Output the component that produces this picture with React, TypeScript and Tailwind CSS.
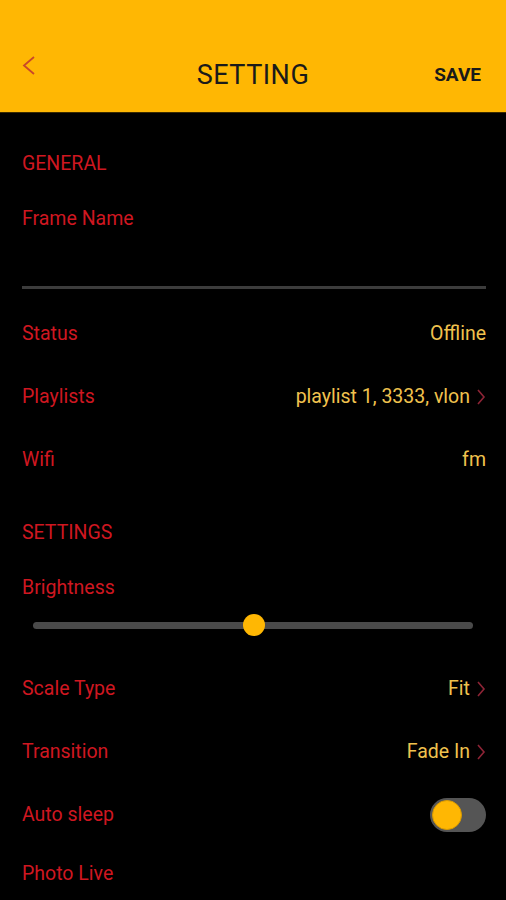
import React from "react";

const RED = "text-[#cf1720]";
const VAL = "text-[#f0c24e]";

function Chevron() {
  return (
    <svg width="10" height="18" viewBox="0 0 10 18" className="ml-[6px]">
      <path d="M2 2 L8 9 L2 16" fill="none" stroke="#8e2436" strokeWidth="1.6" />
    </svg>
  );
}

function Row({ label, value, arrow }: { label: string; value?: string; arrow?: boolean }) {
  return (
    <div className="h-[63px] flex items-center justify-between">
      <span className={RED}>{label}</span>
      {value && (
        <span className={`flex items-center ${VAL}`}>
          {value}
          {arrow && <Chevron />}
        </span>
      )}
    </div>
  );
}

function Label({ text }: { text: string }) {
  return (
    <div className="h-[40px] flex items-center">
      <span className={RED}>{text}</span>
    </div>
  );
}

export default function App() {
  return (
    <div className="w-[506px] h-[900px] bg-black overflow-hidden font-['Roboto',sans-serif] text-[19.5px] leading-none">
      <header className="bg-[#ffb703] h-[113px] flex items-center pt-[38px] px-[22px] border-b border-[#3a2a00]">
        <div className="w-[80px]">
          <svg width="14" height="22" viewBox="0 0 14 22" className="-mt-[19px]">
            <path d="M12 2 L2 10.5 L12 19" fill="none" stroke="#c9472a" strokeWidth="1.8" />
          </svg>
        </div>
        <h1 className="flex-1 text-center text-[27px] tracking-[0.5px] text-[#1a1a1a]">SETTING</h1>
        <div className="w-[80px] text-right pr-[3px]">
          <button className="text-[19px] font-bold text-[#1a1a1a]">SAVE</button>
        </div>
      </header>

      <div className="pl-[22px] pr-[20px]">
        <div className="h-[31px]" />
        <Label text="GENERAL" />
        <div className="h-[15px]" />
        <Label text="Frame Name" />
        <div className="h-[47px]" />
        <div className="w-full h-[3px] bg-[#3c3c3c]" />
        <div className="h-[13px]" />
        <Row label="Status" value="Offline" />
        <Row label="Playlists" value="playlist 1, 3333, vlon" arrow />
        <Row label="Wifi" value="fm" />
        <div className="h-[22px]" />
        <Label text="SETTINGS" />
        <div className="h-[15px]" />
        <Label text="Brightness" />
        <div className="h-[6px]" />
        <div className="h-[22px] flex items-center pl-[11px] pr-[13px] relative">
          <div className="w-full h-[7px] rounded-full bg-[#4a4a4a]" />
          <div className="absolute left-[221px] top-0 w-[22px] h-[22px] rounded-full bg-[#ffb703]" />
        </div>
        <div className="h-[21px]" />
        <Row label="Scale Type" value="Fit" arrow />
        <Row label="Transition" value="Fade In" arrow />
        <div className="h-[63px] flex items-center justify-between">
          <span className={RED}>Auto sleep</span>
          <div className="w-[56px] h-[34px] rounded-full bg-[#555555] flex items-center pl-[2px]">
            <div className="w-[30px] h-[30px] rounded-full bg-[#ffb703] border border-[#d99a00]" />
          </div>
        </div>
        <div className="h-[8px]" />
        <Label text="Photo Live" />
      </div>
    </div>
  );
}
